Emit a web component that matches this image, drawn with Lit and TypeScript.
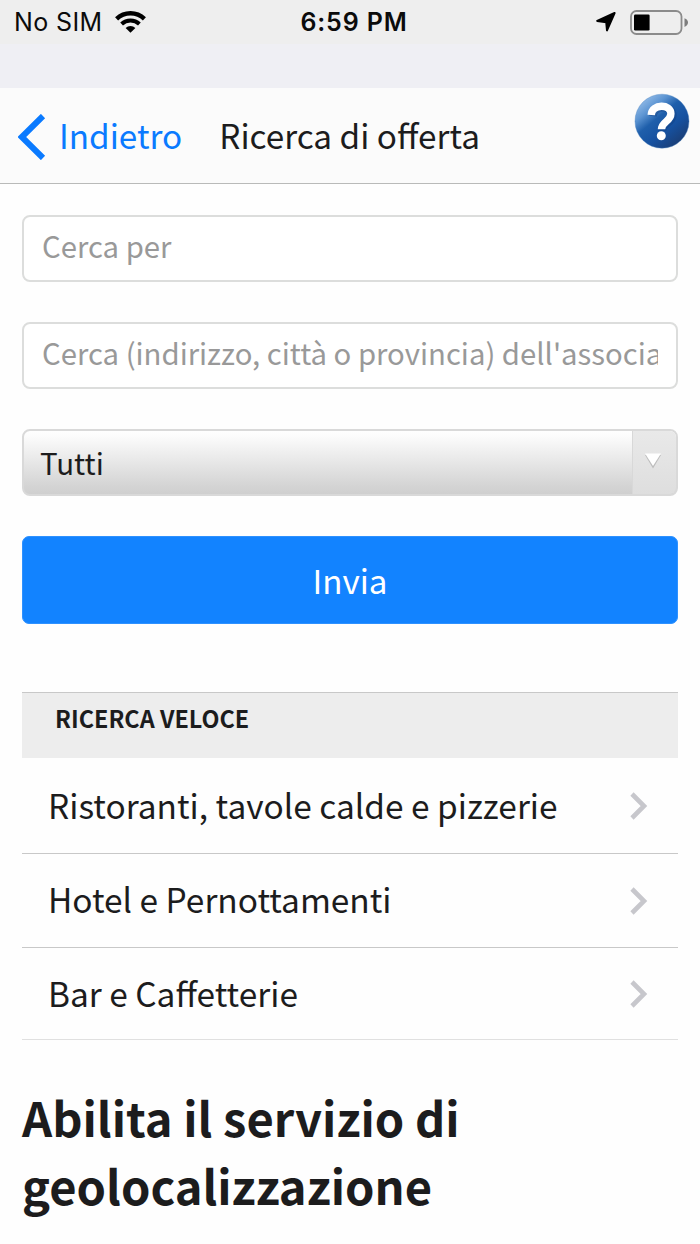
import { LitElement, html, css, svg } from "lit";
import { customElement, state } from "lit/decorators.js";

@customElement("app-root")
export class AppRoot extends LitElement {
  @state() private categories = [
    "Ristoranti, tavole calde e pizzerie",
    "Hotel e Pernottamenti",
    "Bar e Caffetterie",
  ];

  static styles = css`
    :host {
      display: block;
      height: 1244px;
      overflow: hidden;
      background: #fefefe;
      color: #1c1c1d;
      font-family: "Noto Sans CJK SC", "Noto Sans", sans-serif;
      font-feature-settings: "liga" 1;
    }
    * { box-sizing: border-box; }
    svg { display: block; flex: none; }

    .status {
      display: grid;
      grid-template-columns: 1fr auto 1fr;
      align-items: center;
      height: 44px;
      padding: 0 12px 0 14px;
      background: #eeeeee;
      color: #0b0b0b;
      font-family: Inter, sans-serif;
      font-size: 25px;
      line-height: 44px;
    }
    .carrier { display: flex; align-items: center; gap: 12px; letter-spacing: 0.4px; }
    .time { font-weight: 600; padding-left: 6px; letter-spacing: 0.85px; }
    .indicators { display: flex; align-items: center; justify-content: flex-end; gap: 14px; }
    .spacer { height: 44px; background: #efeff4; }

    .nav {
      display: flex;
      align-items: flex-start;
      height: 96px;
      padding: 0 10px 0 18px;
      background: #fbfbfb;
      border-bottom: 1px solid #b9bab9;
      font-size: 33.3px;
      line-height: 94px;
    }
    .back {
      display: flex;
      border: 0;
      padding: 0;
      background: none;
      color: #0a7aff;
      font: inherit;
    }
    .back svg { margin-top: 26px; }
    .back span { margin-left: 13px; }
    .title { margin: 0 0 0 37px; font: inherit; flex: 1; white-space: nowrap; }
    .help { margin-top: 5px; }

    .content { padding: 31px 22px 0; }
    .field {
      display: block;
      width: 100%;
      height: 67px;
      margin: 0 0 40px;
      padding: 0 18px 8px 18px;
      border: 2px solid #dcdddc;
      border-radius: 8px;
      background: #fff;
      font-family: inherit;
      font-size: 29.3px;
      outline: none;
    }
    .field::placeholder { color: #999; opacity: 1; }

    .select {
      display: flex;
      height: 67px;
      border: 2px solid #d9d9d9;
      border-radius: 8px;
      background: linear-gradient(#fff 0%, #fcfcfc 10%, #d4d4d4 85%, #cecece 100%) border-box;
      overflow: hidden;
      font-size: 29.5px;
      line-height: 62px;
    }
    .value { flex: 1; padding-left: 16px; }
    .arrow {
      width: 44px;
      border-left: 1px solid #d8d8d8;
      background: linear-gradient(#e9e9e9, #dedede);
      padding: 22px 0 0 11px;
    }
    .submit {
      display: block;
      width: 100%;
      height: 88px;
      margin-top: 40px;
      padding: 0;
      border: 1px solid #2e91ff;
      border-radius: 7px;
      background: #1283ff;
      color: #fff;
      font-family: inherit;
      font-size: 33.2px;
      line-height: 84px;
    }
    .group {
      height: 66px;
      margin: 68px 0 0;
      padding-left: 33px;
      border-top: 1px solid #c8c8c8;
      background: #ededed;
      font-size: 23.4px;
      font-weight: 700;
      line-height: 50px;
    }
    .list { list-style: none; margin: 0; padding: 0; }
    .item {
      display: flex;
      align-items: center;
      justify-content: space-between;
      height: 94px;
      padding: 0 30px 0 26px;
      border-bottom: 1px solid #c8c8c8;
      font-size: 33.45px;
      line-height: 90px;
    }
    .item span { padding-bottom: 1px; }
    .item:nth-child(2) span { padding-bottom: 3px; }
    .item:first-child { height: 96px; }
    .item:last-child { height: 92px; border-color: #e0e0e0; }
    .heading {
      margin: 43px 0 0;
      font-size: 47.1px;
      line-height: 68px;
      font-weight: 700;
    }
  `;

  private chevron() {
    return svg`<svg width="18" height="28" viewBox="0 0 18 28"><path d="M2 2 14 14 2 26" fill="none" stroke="#c7c7cc" stroke-width="4.6"/></svg>`;
  }

  render() {
    return html`
      <div class="status">
        <div class="carrier">
          <span>No SIM</span>
          <svg width="31" height="22" viewBox="0 0 31 22" fill="none" stroke="#000">
            <path d="M1.6 7.9A20 20 0 0 1 29.4 7.9" stroke-width="4.4"/>
            <path d="M6.6 13A13 13 0 0 1 24.4 13" stroke-width="4"/>
            <path d="M15.5 21.8 10.6 17.1A7 7 0 0 1 20.4 17.1Z" fill="#000" stroke="none"/>
          </svg>
        </div>
        <span class="time">6:59 PM</span>
        <div class="indicators">
          <svg width="20" height="20" viewBox="0 0 20 20"><path d="M18.6 1 11 18.4 10.2 10.2 1.2 9Z" stroke="#000" stroke-width="2" stroke-linejoin="round"/></svg>
          <svg width="58" height="25" viewBox="0 0 58 25">
            <rect x="1" y="1" width="50.5" height="23" rx="5.5" fill="none" stroke="#8b8b8b" stroke-width="1.8"/>
            <rect x="4" y="4.5" width="15.6" height="16" rx="1.2"/>
            <path d="M54.5 8.3Q58 9.7 58 12.5T54.5 16.9Z" fill="#7d7d7d"/>
          </svg>
        </div>
      </div>
      <div class="spacer"></div>
      <header class="nav">
        <button class="back">
          <svg width="28" height="46" viewBox="0 0 28 46"><path d="M25 2 3.8 23 25 44" fill="none" stroke="#0a7aff" stroke-width="6"/></svg>
          <span>Indietro</span>
        </button>
        <h1 class="title">Ricerca di offerta</h1>
        <svg class="help" width="56" height="56" viewBox="0 0 56 56">
          <defs>
            <linearGradient id="ball" x1=".15" y1=".1" x2=".8" y2=".9">
              <stop offset="0" stop-color="#8fb9e6"/>
              <stop offset=".22" stop-color="#5c94d2"/>
              <stop offset=".42" stop-color="#1f5fab"/>
              <stop offset=".7" stop-color="#1651a0"/>
              <stop offset="1" stop-color="#1a3f78"/>
            </linearGradient>
          </defs>
          <circle cx="28" cy="28.2" r="27" fill="url(#ball)" stroke="#4f86c4" stroke-opacity=".5" stroke-width=".8"/>
          <path d="M18 22C19 10.5 37.8 10.5 37.8 21.2 37.8 29 27.5 28.5 27.5 36.5" fill="none" stroke="#0e3c7c" stroke-opacity=".4" stroke-width="8" transform="translate(.8 1.2)"/>
          <path d="M17.2 22C18 10.5 36.9 10.5 36.9 20.8 36.9 28.5 27.5 28.5 27.5 36.3" fill="none" stroke="#fff" stroke-width="7.4"/>
          <circle cx="27.3" cy="42.8" r="4.5" fill="#fff"/>
        </svg>
      </header>
      <main class="content">
        <input class="field" placeholder="Cerca per" />
        <input class="field" placeholder="Cerca (indirizzo, città o provincia) dell'associato" />
        <div class="select">
          <span class="value">Tutti</span>
          <span class="arrow">
            <svg width="18" height="16" viewBox="0 0 18 16"><path d="M1 2H17L9 15.5Z" fill="#bdbdbd"/><path d="M1 .5H17L9 13Z" fill="#fff"/></svg>
          </span>
        </div>
        <button class="submit">Invia</button>
        <h2 class="group">RICERCA VELOCE</h2>
        <ul class="list">
          ${this.categories.map((c) => html`<li class="item"><span>${c}</span>${this.chevron()}</li>`)}
        </ul>
        <h2 class="heading">Abilita il servizio di geolocalizzazione</h2>
      </main>
    `;
  }
}
